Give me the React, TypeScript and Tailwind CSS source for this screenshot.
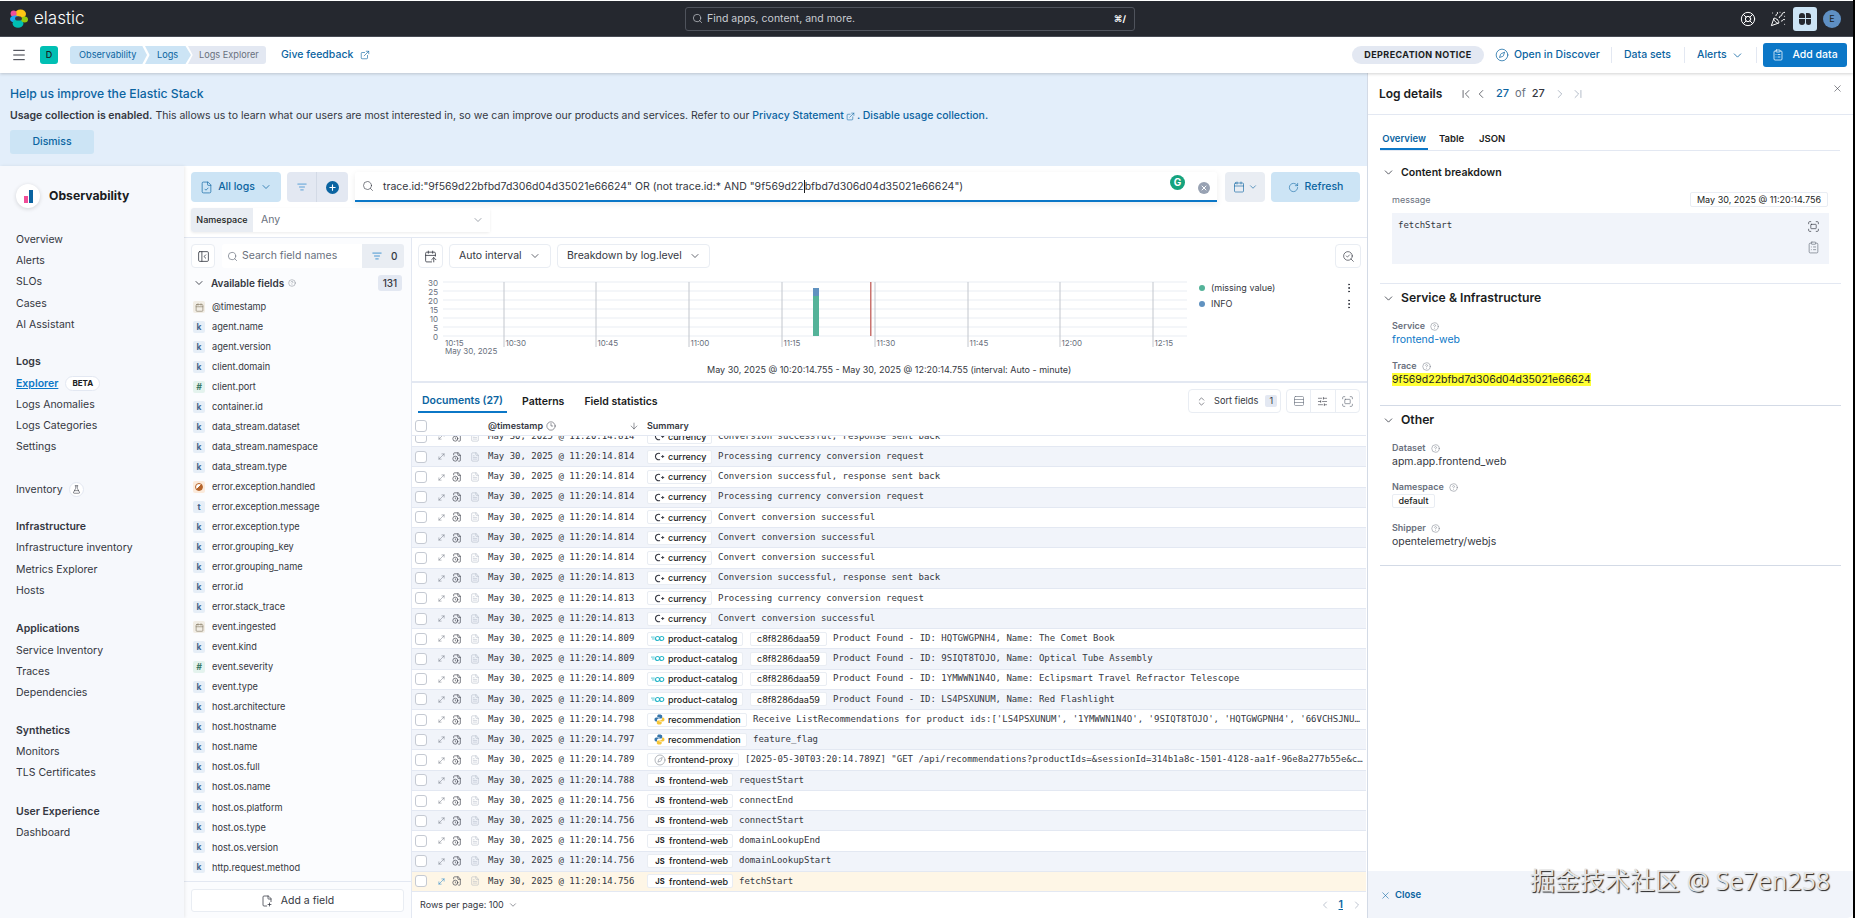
import {
  ArrowDown,
  ChevronDown,
  ChevronFirst,
  ChevronLast,
  ChevronLeft,
  ChevronRight,
  ChevronsUpDown,
  CircleHelp,
  ClipboardList,
  Clock3,
  Compass,
  EllipsisVertical,
  ExternalLink,
  FileClock,
  FileCheck,
  FilePlus2,
  FileText,
  FlaskConical,
  Fullscreen,
  LifeBuoy,
  ListFilter,
  Menu,
  MoveDiagonal,
  PanelLeftClose,
  PartyPopper,
  Plus,
  RotateCw,
  Search,
  SlidersHorizontal,
  X,
  Calendar,
  CalendarArrowUp,
  SearchCheck,
  Rows3,
} from "lucide-react";

/** Log Explorer screen - Elastic Observability */

const TEXT = "text-[#343741]";
const LINK = "text-[#0b64a1]";

const navGroups = [
  { title: "", gap: "", items: ["Overview", "Alerts", "SLOs", "Cases", "AI Assistant"] },
  { title: "Logs", gap: "mt-[16px]", items: ["Explorer", "Logs Anomalies", "Logs Categories", "Settings"] },
  { title: "", gap: "mt-[21px]", items: ["Inventory"] },
  { title: "Infrastructure", gap: "mt-[16px]", items: ["Infrastructure inventory", "Metrics Explorer", "Hosts"] },
  { title: "Applications", gap: "mt-[17px]", items: ["Service Inventory", "Traces", "Dependencies"] },
  { title: "Synthetics", gap: "mt-[16px]", items: ["Monitors", "TLS Certificates"] },
  { title: "User Experience", gap: "mt-[17px]", items: ["Dashboard"] },
];

const fields: [string, string][] = [
  ["d", "@timestamp"],
  ["k", "agent.name"],
  ["k", "agent.version"],
  ["k", "client.domain"],
  ["#", "client.port"],
  ["k", "container.id"],
  ["k", "data_stream.dataset"],
  ["k", "data_stream.namespace"],
  ["k", "data_stream.type"],
  ["b", "error.exception.handled"],
  ["t", "error.exception.message"],
  ["k", "error.exception.type"],
  ["k", "error.grouping_key"],
  ["k", "error.grouping_name"],
  ["k", "error.id"],
  ["k", "error.stack_trace"],
  ["d", "event.ingested"],
  ["k", "event.kind"],
  ["#", "event.severity"],
  ["k", "event.type"],
  ["k", "host.architecture"],
  ["k", "host.hostname"],
  ["k", "host.name"],
  ["k", "host.os.full"],
  ["k", "host.os.name"],
  ["k", "host.os.platform"],
  ["k", "host.os.type"],
  ["k", "host.os.version"],
  ["k", "http.request.method"],
];

interface LogRow {
  ts: string;
  svc: "currency" | "product-catalog" | "recommendation" | "frontend-proxy" | "frontend-web";
  msg: string;
  trace?: boolean;
}

const P = "May 30, 2025 @ 11:20:14.";
const rows: LogRow[] = [
  { ts: P + "814", svc: "currency", msg: "Conversion successful, response sent back" },
  { ts: P + "814", svc: "currency", msg: "Processing currency conversion request" },
  { ts: P + "814", svc: "currency", msg: "Conversion successful, response sent back" },
  { ts: P + "814", svc: "currency", msg: "Processing currency conversion request" },
  { ts: P + "814", svc: "currency", msg: "Convert conversion successful" },
  { ts: P + "814", svc: "currency", msg: "Convert conversion successful" },
  { ts: P + "814", svc: "currency", msg: "Convert conversion successful" },
  { ts: P + "813", svc: "currency", msg: "Conversion successful, response sent back" },
  { ts: P + "813", svc: "currency", msg: "Processing currency conversion request" },
  { ts: P + "813", svc: "currency", msg: "Convert conversion successful" },
  { ts: P + "809", svc: "product-catalog", trace: true, msg: "Product Found - ID: HQTGWGPNH4, Name: The Comet Book" },
  { ts: P + "809", svc: "product-catalog", trace: true, msg: "Product Found - ID: 9SIQT8TOJO, Name: Optical Tube Assembly" },
  { ts: P + "809", svc: "product-catalog", trace: true, msg: "Product Found - ID: 1YMWWN1N4O, Name: Eclipsmart Travel Refractor Telescope" },
  { ts: P + "809", svc: "product-catalog", trace: true, msg: "Product Found - ID: LS4PSXUNUM, Name: Red Flashlight" },
  { ts: P + "798", svc: "recommendation", msg: "Receive ListRecommendations for product ids:['LS4PSXUNUM', '1YMWWN1N4O', '9SIQT8TOJO', 'HQTGWGPNH4', '66VCHSJNU…" },
  { ts: P + "797", svc: "recommendation", msg: "feature_flag" },
  { ts: P + "789", svc: "frontend-proxy", msg: "[2025-05-30T03:20:14.789Z] \"GET /api/recommendations?productIds=&sessionId=314b1a8c-1501-4128-aa1f-96e8a277b55e&c…" },
  { ts: P + "788", svc: "frontend-web", msg: "requestStart" },
  { ts: P + "756", svc: "frontend-web", msg: "connectEnd" },
  { ts: P + "756", svc: "frontend-web", msg: "connectStart" },
  { ts: P + "756", svc: "frontend-web", msg: "domainLookupEnd" },
  { ts: P + "756", svc: "frontend-web", msg: "domainLookupStart" },
  { ts: P + "756", svc: "frontend-web", msg: "fetchStart" },
];

function ElasticLogo() {
  return (
    <svg width="18" height="19" viewBox="0 0 18 19" className="shrink-0">
      <ellipse cx="10.5" cy="5" rx="5.5" ry="4.6" fill="#fec514" />
      <ellipse cx="3.6" cy="4.6" rx="3" ry="3.2" fill="#f04e98" />
      <ellipse cx="5" cy="10" rx="5" ry="3.6" fill="#1ba9f5" />
      <ellipse cx="8" cy="14.4" rx="5.4" ry="4.4" fill="#00bfb3" />
      <ellipse cx="14.6" cy="10.4" rx="3.4" ry="3" fill="#93c90e" />
      <ellipse cx="8.5" cy="9.4" rx="3.4" ry="2.2" fill="#343741" />
    </svg>
  );
}

function ObsLogo() {
  return (
    <div className="w-6 h-6 rounded-full bg-white shadow-[0_1px_4px_rgba(0,0,0,0.15)] flex items-end justify-center gap-[1px] pb-[5px]">
      <span className="w-[4px] h-[7px] bg-[#f04e98]" />
      <span className="w-[4px] h-[13px] bg-[#0b64a1]" />
    </div>
  );
}

function TopBar() {
  return (
    <div className="h-9 bg-[#25282f] border-b border-[#4a4e57] flex items-center shrink-0 relative">
      <div className="w-[685px] flex items-center pl-[10px] gap-[6px]">
        <ElasticLogo />
        <span className="text-[17px] text-white font-light">elastic</span>
      </div>
      <div className="w-[450px] h-6 rounded-[3px] border border-[#4f535c] flex items-center pl-[6px] pr-[8px] gap-[4px] text-[#c9ccd2]">
        <Search size={11} strokeWidth={1.5} />
        <span className="text-[10.5px] flex-1">Find apps, content, and more.</span>
        <span className="text-[9px] font-bold text-white">⌘/</span>
      </div>
      <div className="flex-1 flex items-center justify-end pr-[12px]">
        <LifeBuoy size={16} strokeWidth={1.5} className="text-white mr-[14px]" />
        <PartyPopper size={16} strokeWidth={1.5} className="text-white mr-[7px]" />
        <div className="w-6 h-6 rounded-[3px] bg-[#cce4f5] grid grid-cols-2 gap-[1px] p-[6px] mr-[6px]">
          <span className="bg-[#25282f] rounded-t-[3px]" />
          <span className="bg-[#25282f] rounded-tr-[3px]" />
          <span className="bg-[#25282f] rounded-b-[3px]" />
          <span className="bg-[#25282f] rounded-b-[3px]" />
        </div>
        <div className="w-[18px] h-[18px] rounded-full bg-[#5f90c4] text-[9px] text-[#1a1c21] flex items-center justify-center">
          E
        </div>
      </div>
    </div>
  );
}

function SubHeader() {
  return (
    <div className="h-9 bg-white flex items-center shrink-0 shadow-[0_1px_3px_rgba(0,0,0,0.18)] relative z-20">
      <Menu size={16} strokeWidth={1.5} className={`ml-[11px] ${TEXT}`} />
      <div className="ml-[13px] w-[18px] h-[18px] rounded-[3px] bg-[#00bfb3] text-[9px] font-medium text-[#1a1c21] flex items-center justify-center">
        D
      </div>
      <div className="ml-[12px] flex items-center h-[18px] text-[9.2px] whitespace-nowrap">
        <div className="h-full w-[77px] pl-[9px] flex items-center bg-[#cce4f5] rounded-l-[3px] [clip-path:polygon(0_0,94%_0,100%_50%,94%_100%,0_100%)] text-[#0b64a1]">
          Observability
        </div>
        <div className="h-full w-[46px] -ml-[2px] pl-[12px] flex items-center bg-[#cce4f5] [clip-path:polygon(0_0,88%_0,100%_50%,88%_100%,0_100%,10%_50%)] text-[#0b64a1]">
          Logs
        </div>
        <div className="h-full w-[78px] -ml-[3px] pl-[11px] flex items-center bg-[#e3e8f2] rounded-r-[3px] [clip-path:polygon(0_0,100%_0,100%_100%,0_100%,6%_50%)] text-[#69707d]">
          Logs Explorer
        </div>
      </div>
      <span className={`ml-[15px] text-[10.5px] font-medium ${LINK}`}>Give feedback</span>
      <ExternalLink size={10} strokeWidth={1.5} className="ml-[7px] text-[#0b64a1]" />
      <div className="flex-1" />
      <div className="w-[132px] h-[18px] rounded-full bg-[#e3e8f2] text-[9px] font-bold tracking-[0.4px] text-[#1a1c21] flex items-center justify-center whitespace-nowrap">
        DEPRECATION NOTICE
      </div>
      <Compass size={14} strokeWidth={1.25} className="ml-[11px] text-[#0b64a1]" />
      <span className={`ml-[5px] w-[97px] text-[10.5px] ${LINK} font-medium whitespace-nowrap`}>Open in Discover</span>
      <span className="w-px h-4 bg-[#e3e8f2] mr-[12px]" />
      <span className={`w-[60px] text-[10.5px] ${LINK} font-medium`}>Data sets</span>
      <span className="w-px h-4 bg-[#e3e8f2] mr-[12px]" />
      <span className={`w-[28px] text-[10.5px] ${LINK} font-medium`}>Alerts</span>
      <ChevronDown size={13} strokeWidth={1.5} className="ml-[6px] text-[#0b64a1]" />
      <span className="w-px h-4 bg-[#e3e8f2] ml-[12px] mr-[6px]" />
      <div className="w-[84px] h-6 mr-[6px] rounded-[3px] bg-[#0b77c7] text-white text-[10.5px] font-medium flex items-center justify-center gap-[8px]">
        <ClipboardList size={12} strokeWidth={1.5} />
        Add data
      </div>
    </div>
  );
}

function Banner() {
  return (
    <div className="h-[93px] bg-[#e3eefa] pl-[10px] pt-[12px] shrink-0">
      <div className={`text-[12.2px] leading-[18px] font-medium ${LINK}`}>Help us improve the Elastic Stack</div>
      <div className={`mt-[4px] text-[10.5px] leading-[18px] ${TEXT}`}>
        <span className="font-semibold">Usage collection is enabled.</span> This allows us to learn what our users are
        most interested in, so we can improve our products and services. Refer to our{" "}
        <span className={`${LINK} font-medium`}>Privacy Statement</span>
        <ExternalLink size={9} strokeWidth={1.5} className="inline mx-[2px] text-[#0b64a1]" />
        <span className={`${LINK} font-medium`}>. Disable usage collection.</span>
      </div>
      <div className="mt-[5px] w-[84px] h-6 rounded-[3px] bg-[#cce4f5] text-[10.5px] font-medium flex items-center justify-center text-[#0b64a1]">
        Dismiss
      </div>
    </div>
  );
}

function Sidebar() {
  return (
    <div className="w-[184px] shrink-0 bg-[#f6f8fc] pl-4 pt-[18px] shadow-[1px_0_3px_rgba(0,0,0,0.08)] z-10">
      <div className="flex items-center gap-[9px] h-6">
        <ObsLogo />
        <span className="text-[12.2px] font-bold text-[#1a1c21]">Observability</span>
      </div>
      <div className="mt-[21px]">
        {navGroups.map((g, gi) => (
          <div key={gi} className={g.gap}>
            {g.title && <div className={`h-[21.5px] leading-[21px] text-[10.5px] font-semibold ${TEXT}`}>{g.title}</div>}
            {g.items.map((it) => (
              <div key={it} className={`h-[21.25px] flex items-center text-[10.5px] ${TEXT}`}>
                {it === "Explorer" ? (
                  <>
                    <span className="font-semibold text-[#0b77c7] underline">Explorer</span>
                    <span className="ml-[7px] h-[15px] w-[35px] rounded-full border border-[#e3e8f2] bg-white text-[8px] font-bold text-[#1a1c21] flex items-center justify-center">
                      BETA
                    </span>
                  </>
                ) : it === "Inventory" ? (
                  <>
                    {it}
                    <span className="ml-[6px] w-[15px] h-[15px] rounded-full border border-[#e3e8f2] bg-white flex items-center justify-center">
                      <FlaskConical size={9} strokeWidth={1.5} />
                    </span>
                  </>
                ) : (
                  it
                )}
              </div>
            ))}
          </div>
        ))}
      </div>
    </div>
  );
}

function FieldToken({ kind }: { kind: string }) {
  if (kind === "d")
    return (
      <span className="w-3 h-3 rounded-[2px] bg-[#f1ede5] flex items-center justify-center text-[#8a7f6a]">
        <Calendar size={9} strokeWidth={1.75} />
      </span>
    );
  if (kind === "b")
    return (
      <span className="w-3 h-3 rounded-[2px] bg-[#fbeadb] flex items-center justify-center">
        <span className="w-2 h-2 rounded-full bg-[linear-gradient(135deg,#fff_50%,#b5642a_50%)] border border-[#b5642a]" />
      </span>
    );
  if (kind === "#")
    return (
      <span className="w-3 h-3 rounded-[2px] bg-[#e4f3ee] text-[8.5px] font-bold italic text-[#3d7a66] flex items-center justify-center">
        #
      </span>
    );
  return (
    <span className="w-3 h-3 rounded-[2px] bg-[#e6eef7] text-[8.5px] font-bold text-[#45648a] flex items-center justify-center">
      {kind}
    </span>
  );
}

function FieldsPanel() {
  return (
    <div className="w-[228px] shrink-0 bg-[#fbfcfe] border-r border-[#e3e8f2] flex flex-col px-[7px] pt-[6px] min-h-0">
      <div className="flex h-6 gap-[7px] shrink-0">
        <div className="w-6 h-6 rounded-[4px] border border-[#e9edf3] bg-white flex items-center justify-center">
          <PanelLeftClose size={13} strokeWidth={1.5} className={TEXT} />
        </div>
        <div className="flex-1 flex rounded-[3px] overflow-hidden">
          <div className="flex-1 bg-white flex items-center pl-[5px] gap-[4px] text-[#69707d]">
            <Search size={11} strokeWidth={1.5} />
            <span className="text-[10.5px]">Search field names</span>
          </div>
          <div className="w-[42px] bg-[#e9edf3] flex items-center pl-[10px] gap-[9px]">
            <ListFilter size={10} strokeWidth={1.75} className="text-[#0b77c7]" />
            <span className="text-[10px] font-medium text-[#343741]">0</span>
          </div>
        </div>
      </div>
      <div className="mt-[7px] h-4 flex items-center shrink-0 pl-[2px]">
        <ChevronDown size={12} strokeWidth={1.75} className={TEXT} />
        <span className={`ml-[6px] text-[10px] font-semibold ${TEXT}`}>Available fields</span>
        <CircleHelp size={8} strokeWidth={1.25} className="ml-[4px] text-[#69707d]" />
        <span className="ml-auto mr-[2px] w-6 h-4 rounded-[3px] bg-[#e3e8f2] text-[10px] font-medium text-[#343741] flex items-center justify-center">
          131
        </span>
      </div>
      <div className="mt-[6px] flex-1 min-h-0 overflow-hidden">
        {fields.map(([k, f]) => (
          <div key={f} className="h-[20.03px] flex items-center pl-[2px] gap-[7px]">
            <FieldToken kind={k} />
            <span className="text-[9.2px] text-[#343741]">{f}</span>
          </div>
        ))}
      </div>
      <div className="-mx-[7px] border-t border-[#e3e8f2] px-[7px] pt-[7px] pb-[6px] shrink-0">
        <div className={`h-[23px] rounded-[3px] border border-[#e9edf3] bg-white flex items-center justify-center gap-[8px] text-[10.5px] ${TEXT}`}>
          <FilePlus2 size={12} strokeWidth={1.5} />
          Add a field
        </div>
      </div>
    </div>
  );
}

const ticks = [
  { x: 31, l: "10:15" },
  { x: 92, l: "10:30" },
  { x: 184, l: "10:45" },
  { x: 277, l: "11:00" },
  { x: 370, l: "11:15" },
  { x: 463, l: "11:30" },
  { x: 556, l: "11:45" },
  { x: 648, l: "12:00" },
  { x: 741, l: "12:15" },
];

function Chart() {
  return (
    <svg width="955" height="80" className="block mt-[8px]">
      {[0, 1, 2, 3, 4, 5, 6].map((i) => (
        <g key={i}>
          <line x1="31" x2="775" y1={6 + i * 9} y2={6 + i * 9} stroke="#e9edf3" strokeWidth="1" />
          <text x="26" y={9.5 + i * 9} textAnchor="end" fontSize="8" fill="#69707d" fontFamily="Inter">
            {30 - i * 5}
          </text>
        </g>
      ))}
      {ticks.map((t, i) => (
        <g key={t.l}>
          {i > 0 && <line x1={t.x} x2={t.x} y1="6" y2="71" stroke="#c2c6cd" strokeWidth="1" />}
          <text x={t.x + (i === 0 ? 2 : 1.5)} y="70" fontSize="8" fill="#69707d" fontFamily="Inter">
            {t.l}
          </text>
        </g>
      ))}
      <text x="33" y="78" fontSize="8" fill="#69707d" fontFamily="Inter">
        May 30, 2025
      </text>
      <rect x="401" y="12" width="6" height="8" fill="#6092c0" />
      <rect x="401" y="20" width="6" height="40" fill="#54b399" />
      <rect x="458" y="6" width="1.5" height="54" fill="#c9736f" />
    </svg>
  );
}

function ChartPanel() {
  return (
    <div className="h-[145px] border-b-2 border-[#e3e8f2] shrink-0 px-[6px] pt-[6px] relative">
      <div className="flex gap-[6px] items-center h-6 whitespace-nowrap">
        <div className="w-[25px] h-6 rounded-[4px] border border-[#e9edf3] flex items-center justify-center">
          <CalendarArrowUp size={13} strokeWidth={1.5} className={TEXT} />
        </div>
        <div className={`w-[102px] h-6 rounded-[4px] border border-[#e9edf3] flex items-center pl-[9px] gap-[7px] text-[10.5px] ${TEXT}`}>
          Auto interval <ChevronDown size={12} strokeWidth={1.5} />
        </div>
        <div className={`w-[153px] h-6 rounded-[4px] border border-[#e9edf3] flex items-center pl-[9px] gap-[7px] text-[10.5px] ${TEXT}`}>
          Breakdown by log.level <ChevronDown size={12} strokeWidth={1.5} />
        </div>
        <div className="ml-auto w-[26px] h-6 rounded-[4px] border border-[#e9edf3] flex items-center justify-center">
          <SearchCheck size={13} strokeWidth={1.25} className={TEXT} />
        </div>
      </div>
      <div className="-mx-[6px]">
        <Chart />
      </div>
      <div className={`absolute left-0 right-0 top-[124px] pl-[295px] text-[9px] leading-4 ${TEXT}`}>
        May 30, 2025 @ 10:20:14.755 - May 30, 2025 @ 12:20:14.755 (interval: Auto - minute)
      </div>
      <div className="absolute left-[787px] w-[156px] top-[42px] text-[9px] text-[#343741]">
        <div className="h-4 flex items-center">
          <span className="w-[6px] h-[6px] rounded-full bg-[#54b399] mr-[6px]" />
          (missing value)
          <EllipsisVertical size={12} className="ml-auto" />
        </div>
        <div className="h-4 flex items-center">
          <span className="w-[6px] h-[6px] rounded-full bg-[#6092c0] mr-[6px]" />
          INFO
          <EllipsisVertical size={12} className="ml-auto" />
        </div>
      </div>
    </div>
  );
}

function ServiceIcon({ svc }: { svc: LogRow["svc"] }) {
  if (svc === "currency")
    return (
      <svg width="11" height="9" viewBox="0 0 11 9" className="shrink-0">
        <path d="M6 1.6A3.2 3.2 0 1 0 6 7.4" fill="none" stroke="#343741" strokeWidth="1.1" />
        <path d="M7.2 4.5h3M8.7 3v3" stroke="#343741" strokeWidth="0.9" />
      </svg>
    );
  if (svc === "product-catalog")
    return (
      <svg width="14" height="7" viewBox="0 0 15 7" className="shrink-0 -ml-[3px]">
        <path d="M0 2h4M1 4h3" stroke="#29b6c9" strokeWidth="0.8" />
        <circle cx="7" cy="3.5" r="2.2" fill="none" stroke="#29b6c9" strokeWidth="1.2" />
        <circle cx="11.5" cy="3.5" r="2.2" fill="none" stroke="#29b6c9" strokeWidth="1.2" />
      </svg>
    );
  if (svc === "recommendation")
    return (
      <svg width="11" height="11" viewBox="0 0 11 11" className="shrink-0">
        <path d="M5.4.5C3.6.5 3.3 1.2 3.3 2v1.1h2.3v.4H2.2C1 3.5.5 4.3.5 5.5s.6 2 1.6 2h.9V6.2c0-1 .9-1.6 1.8-1.6h2c.8 0 1.4-.6 1.4-1.4V2C8.2 1 7.2.5 5.4.5z" fill="#3776ab" />
        <path d="M5.6 10.5c1.8 0 2.1-.7 2.1-1.5V7.9H5.4v-.4h3.4c1.2 0 1.700-.8 1.700-2s-.6-2-1.600-2H8v1.300c0 1-.9 1.600-1.800 1.600h-2c-.8 0-1.400.6-1.400 1.400V9c0 1 1 1.500 2.800 1.500z" fill="#f5c63c" />
      </svg>
    );
  if (svc === "frontend-proxy")
    return <Compass size={12} strokeWidth={1} className="text-[#69707d] shrink-0 -mr-[1px]" />;
  return <span className="text-[7.5px] font-bold text-[#1a1c21] w-[10px] mx-[1px] text-center shrink-0">JS</span>;
}

const badgeWidth: Record<LogRow["svc"], string> = {
  currency: "w-[65px]",
  "product-catalog": "w-[96px]",
  recommendation: "w-[100px]",
  "frontend-proxy": "w-[92px]",
  "frontend-web": "w-[86px]",
};

function TableRow({ r, i, last }: { r: LogRow; i: number; last: boolean }) {
  const bg = last ? "bg-[#fef6e6]" : i % 2 === 1 ? "bg-[#f1f4fa]" : "bg-white";
  return (
    <div className={`h-[20.23px] shrink-0 flex items-center border-b border-[#e3e8f2] ${bg}`}>
      <span className="ml-[3px] w-3 h-3 rounded-[3px] border border-[#c5cad3] bg-white shrink-0" />
      <MoveDiagonal size={9} strokeWidth={1.25} className={`ml-[10px] shrink-0 ${last ? "text-[#0b77c7]" : "text-[#69707d]"}`} />
      <FileClock size={10} strokeWidth={1.5} className="ml-[6px] shrink-0 text-[#343741]" />
      <FileText size={10} strokeWidth={1} className="ml-[8px] shrink-0 text-[#98a2b3]" />
      <span className="ml-[8px] w-[159px] shrink-0 font-['DejaVu_Sans_Mono',monospace] text-[9px] text-[#343741]">{r.ts}</span>
      <span className={`${badgeWidth[r.svc]} h-[14px] shrink-0 rounded-[2px] bg-white border border-[#e9edf3] flex items-center pl-[6px] gap-[3px] text-[9px] font-medium text-[#1a1c21] whitespace-nowrap`}>
        <ServiceIcon svc={r.svc} />
        {r.svc}
      </span>
      {r.trace && (
        <span className="ml-[7px] w-[77px] h-[14px] shrink-0 rounded-[2px] bg-white border border-[#e9edf3] flex items-center justify-center text-[9px] text-[#1a1c21]">
          c8f8286daa59
        </span>
      )}
      <span className="ml-[6px] font-['DejaVu_Sans_Mono',monospace] text-[9px] text-[#343741] whitespace-nowrap">{r.msg}</span>
    </div>
  );
}

function DocsPanel() {
  return (
    <div className="flex-1 min-h-0 flex flex-col pr-px">
      <div className="mt-[6px] h-6 flex items-center shrink-0 px-[6px] whitespace-nowrap">
        <div className="h-6 w-[89px] pt-[2px] border-b-2 border-[#0b77c7] flex items-center justify-center text-[10.5px] font-semibold text-[#0b64a1]">
          Documents (27)
        </div>
        <span className="ml-[15px] pt-[1px] text-[10.5px] font-semibold text-[#1a1c21]">Patterns</span>
        <span className="ml-[20px] pt-[1px] text-[10.5px] font-semibold text-[#1a1c21]">Field statistics</span>
        <div className={`ml-auto w-[93px] h-6 rounded-[4px] border border-[#e9edf3] flex items-center pl-[7px] gap-[7px] text-[9.2px] ${TEXT}`}>
          <ChevronsUpDown size={11} strokeWidth={1.25} />
          Sort fields
          <span className="w-3 h-3 rounded-[2px] bg-[#e3e8f2] text-[9px] flex items-center justify-center">1</span>
        </div>
        <div className="ml-[5px] w-[74px] h-6 rounded-[4px] border border-[#e9edf3] flex">
          <div className="flex-1 flex items-center justify-center border-r border-[#e9edf3]">
            <Rows3 size={12} strokeWidth={1.25} className="text-[#69707d]" />
          </div>
          <div className="flex-1 flex items-center justify-center border-r border-[#e9edf3]">
            <SlidersHorizontal size={11} strokeWidth={1.25} className={TEXT} />
          </div>
          <div className="flex-1 flex items-center justify-center">
            <Fullscreen size={13} strokeWidth={1.25} className="text-[#69707d]" />
          </div>
        </div>
      </div>
      <div className="mt-[4px] h-[19px] shrink-0 flex items-center border-b border-[#e3e8f2] text-[9px] font-semibold text-[#343741]">
        <span className="ml-[3px] w-3 h-3 rounded-[3px] border border-[#c5cad3] bg-white" />
        <span className="ml-[61px] w-[55px]">@timestamp</span>
        <Clock3 size={10} strokeWidth={1.25} className="ml-[3px]" />
        <ArrowDown size={10} strokeWidth={1.25} className="ml-[73px]" />
        <span className="ml-[8px]">Summary</span>
      </div>
      <div className="flex-1 min-h-0 overflow-hidden flex flex-col justify-end">
        {rows.map((r, i) => (
          <TableRow key={i} r={r} i={i} last={i === rows.length - 1} />
        ))}
      </div>
      <div className={`h-[26px] shrink-0 flex items-center pl-[8px] text-[9px] ${TEXT}`}>
        Rows per page: 100
        <ChevronDown size={10} strokeWidth={1.25} className="ml-[4px]" />
        <ChevronLeft size={12} strokeWidth={1.25} className="ml-auto text-[#98a2b3]" />
        <span className="ml-[8px] text-[10.5px] font-semibold text-[#0b64a1] underline">1</span>
        <ChevronRight size={12} strokeWidth={1.25} className="ml-[8px] mr-[3px] text-[#98a2b3]" />
      </div>
    </div>
  );
}

function QueryBar() {
  return (
    <div className="shrink-0 border-b border-[#e3e8f2] pl-[7px] pr-[7px] pt-[6px] pb-[5px] bg-white">
      <div className="flex h-[30px]">
        <div className="w-[90px] rounded-[4px] bg-[#cce4f5] flex items-center justify-center gap-[5px] text-[10.5px] font-medium text-[#0b64a1]">
          <FileCheck size={13} strokeWidth={1.25} />
          All logs
          <ChevronDown size={12} strokeWidth={1.5} />
        </div>
        <div className="ml-[6px] w-[61px] rounded-[4px] bg-[#e3e8f2] flex">
          <div className="w-[30px] border-r border-[#d3dae6] flex items-center justify-center">
            <ListFilter size={10} strokeWidth={1.5} className="text-[#0b77c7]" />
          </div>
          <div className="flex-1 flex items-center justify-center">
            <span className="w-[13px] h-[13px] rounded-full bg-[#0b64a1] flex items-center justify-center">
              <Plus size={9} strokeWidth={3} className="text-white" />
            </span>
          </div>
        </div>
        <div className="ml-[7px] w-[862px] relative bg-white border-b-2 border-[#0b77c7] shadow-[0_2px_6px_rgba(0,0,0,0.08)] rounded-t-[3px] flex items-center pl-[7px] gap-[9px]">
          <Search size={12} strokeWidth={1.25} className={TEXT} />
          <span className={`text-[10.5px] whitespace-nowrap pt-[1px] ${TEXT}`}>
            {'trace.id:"9f569d22bfbd7d306d04d35021e66624" OR (not trace.id:* AND "9f569d22'}
            <span className="border-l border-[#1a1c21]">{'bfbd7d306d04d35021e66624")'}</span>
          </span>
          <span className="absolute left-[815px] top-[3px] w-[15px] h-[15px] rounded-full bg-[#15a37e] text-white text-[10px] font-bold flex items-center justify-center">
            G
          </span>
          <span className="absolute left-[843px] top-[10px] w-3 h-3 rounded-full bg-[#98a2b3] flex items-center justify-center">
            <X size={8} strokeWidth={3} className="text-white" />
          </span>
        </div>
        <div className="ml-[8px] w-10 rounded-[4px] bg-[#e9edf3] flex items-center justify-center gap-[3px] text-[#0b64a1]">
          <Calendar size={12} strokeWidth={1.25} />
          <ChevronDown size={10} strokeWidth={1.5} />
        </div>
        <div className="ml-[6px] w-[89px] rounded-[4px] bg-[#cce4f5] flex items-center justify-center gap-[6px] text-[10.5px] font-medium text-[#0b64a1]">
          <RotateCw size={11} strokeWidth={1.25} />
          Refresh
        </div>
      </div>
      <div className="mt-[6px] h-6 w-[299px] flex rounded-[3px] shadow-[0_1px_3px_rgba(0,0,0,0.08)]">
        <div className="w-[62px] bg-[#e9edf3] rounded-l-[3px] text-[9px] font-medium text-[#1a1c21] flex items-center justify-center">
          Namespace
        </div>
        <div className="flex-1 bg-white flex items-center pl-[8px] pr-[6px] text-[10.5px] text-[#69707d]">
          Any
          <ChevronDown size={12} strokeWidth={1.25} className="ml-auto" />
        </div>
      </div>
    </div>
  );
}

function HelpLabel({ children }: { children: string }) {
  return (
    <div className="flex items-center gap-[5px] h-[14px] text-[9px] font-semibold text-[#69707d]">
      {children}
      <CircleHelp size={9} strokeWidth={1.25} />
    </div>
  );
}

function SectionHead({ title, size }: { title: string; size: string }) {
  return (
    <div className="flex items-center pl-[2px] h-[15px]">
      <ChevronDown size={13} strokeWidth={1.5} className={TEXT} />
      <span className={`ml-[6px] font-semibold text-[#1a1c21] ${size}`}>{title}</span>
    </div>
  );
}

function Flyout() {
  return (
    <div className="flex-1 flex flex-col border-l border-[#d3dae6] bg-white min-w-0 relative z-10">
      <div className="h-[42px] border-b border-[#e3e8f2] flex items-center pl-[11px] shrink-0 relative">
        <span className="text-[12px] font-semibold text-[#1a1c21] w-[80px]">Log details</span>
        <ChevronFirst size={14} strokeWidth={1.25} className={TEXT} />
        <ChevronLeft size={14} strokeWidth={1.25} className={`ml-[1px] ${TEXT}`} />
        <span className="ml-[8px] text-[11px] font-medium text-[#0b64a1]">27</span>
        <span className="ml-[6px] text-[11px] text-[#69707d]">of</span>
        <span className={`ml-[6px] text-[11px] font-medium ${TEXT}`}>27</span>
        <ChevronRight size={14} strokeWidth={1.25} className="ml-[8px] text-[#98a2b3]" />
        <ChevronLast size={14} strokeWidth={1.25} className="ml-[4px] text-[#98a2b3]" />
        <X size={11} strokeWidth={1.25} className={`absolute right-[10px] top-[10px] ${TEXT}`} />
      </div>
      <div className="px-3 flex-1 min-h-0">
        <div className="mr-[1px] h-[36px] flex items-end border-b border-[#e3e8f2] text-[9.5px] text-[#1a1c21]">
          <div className="w-[48px] h-[18px] border-b-2 border-[#0b77c7] text-[#0b64a1] text-center font-semibold">Overview</div>
          <div className="ml-[11px] h-[18px] font-semibold">Table</div>
          <div className="ml-[15px] h-[18px] font-semibold">JSON</div>
        </div>
        <div className="mt-[14px]">
          <SectionHead title="Content breakdown" size="text-[10.6px]" />
        </div>
        <div className="ml-3 mr-[12px]">
          <div className="mt-[12px] h-[15px] flex items-center justify-between">
            <span className="text-[9px] text-[#69707d]">message</span>
            <span className="w-[138px] h-[15px] mr-[1px] border border-[#e9edf3] rounded-[2px] text-[9px] text-[#1a1c21] flex items-center justify-center whitespace-nowrap">
              May 30, 2025 @ 11:20:14.756
            </span>
          </div>
          <div className="mt-[6px] h-[51px] bg-[#f1f4fa] flex justify-between pl-[6px] pr-[9px] pt-[6px]">
            <span className="font-['DejaVu_Sans_Mono',monospace] text-[9px] text-[#343741] leading-[12px]">fetchStart</span>
            <div className="flex flex-col gap-[8px] pt-[1px]">
              <Fullscreen size={13} strokeWidth={1.25} className={TEXT} />
              <ClipboardList size={13} strokeWidth={1.25} className="text-[#69707d]" />
            </div>
          </div>
        </div>
        <div className="mt-[19px] border-t border-[#e3e8f2] pt-[7px] h-[122px]">
          <SectionHead title="Service & Infrastructure" size="text-[12.2px]" />
          <div className="ml-3 mt-[13px]">
            <HelpLabel>Service</HelpLabel>
            <div className="text-[10.5px] leading-[14px] text-[#0b77c7]">frontend-web</div>
            <div className="mt-[12px]">
              <HelpLabel>Trace</HelpLabel>
            </div>
            <div className="text-[10.5px] leading-[14px]">
              <span className="bg-[#ffff33] text-[#1a1c21]">9f569d22bfbd7d306d04d35021e66624</span>
            </div>
          </div>
        </div>
        <div className="border-t border-[#d3dae6] pt-[7px] h-[161px] border-b">
          <SectionHead title="Other" size="text-[12.2px]" />
          <div className="ml-3 mt-[13px]">
            <HelpLabel>Dataset</HelpLabel>
            <div className={`text-[10.5px] leading-[14px] ${TEXT}`}>apm.app.frontend_web</div>
            <div className="mt-[11px]">
              <HelpLabel>Namespace</HelpLabel>
            </div>
            <div className="w-[43px] h-[14px] border border-[#e9edf3] rounded-[2px] bg-white text-[9px] font-medium text-[#1a1c21] flex items-center justify-center">
              default
            </div>
            <div className="mt-[13px]">
              <HelpLabel>Shipper</HelpLabel>
            </div>
            <div className={`text-[10.5px] leading-[14px] ${TEXT}`}>opentelemetry/webjs</div>
          </div>
        </div>
      </div>
      <div className="h-[47px] shrink-0 bg-[#f1f4fa] flex items-center pl-[12px] pt-[1px] gap-[4px] text-[9.5px] font-semibold text-[#0b64a1] rounded-br-[6px]">
        <X size={11} strokeWidth={1.25} />
        Close
      </div>
    </div>
  );
}

export default function App() {
  return (
    <div className="w-[1855px] h-[918px] overflow-hidden bg-black flex font-['Inter',sans-serif] relative">
      <div className="w-[1853px] h-full flex flex-col bg-white pt-px">
        <TopBar />
        <SubHeader />
        <div className="flex-1 min-h-0 flex">
          <div className="w-[1367px] shrink-0 flex flex-col min-h-0">
            <Banner />
            <div className="flex-1 min-h-0 flex">
              <Sidebar />
              <div className="flex-1 min-w-0 flex flex-col">
                <QueryBar />
                <div className="flex-1 min-h-0 flex">
                  <FieldsPanel />
                  <div className="flex-1 min-w-0 flex flex-col">
                    <ChartPanel />
                    <DocsPanel />
                  </div>
                </div>
              </div>
            </div>
          </div>
          <Flyout />
        </div>
      </div>
      <div className="absolute left-[1530px] top-[865px] z-30 text-[25px] leading-[30px] text-[#e4e4e4] whitespace-nowrap font-['Noto_Sans','Noto_Sans_CJK_SC',sans-serif] [text-shadow:1px_1px_1px_#222]">
        掘金技术社区 @ Se7en258
      </div>
    </div>
  );
}
